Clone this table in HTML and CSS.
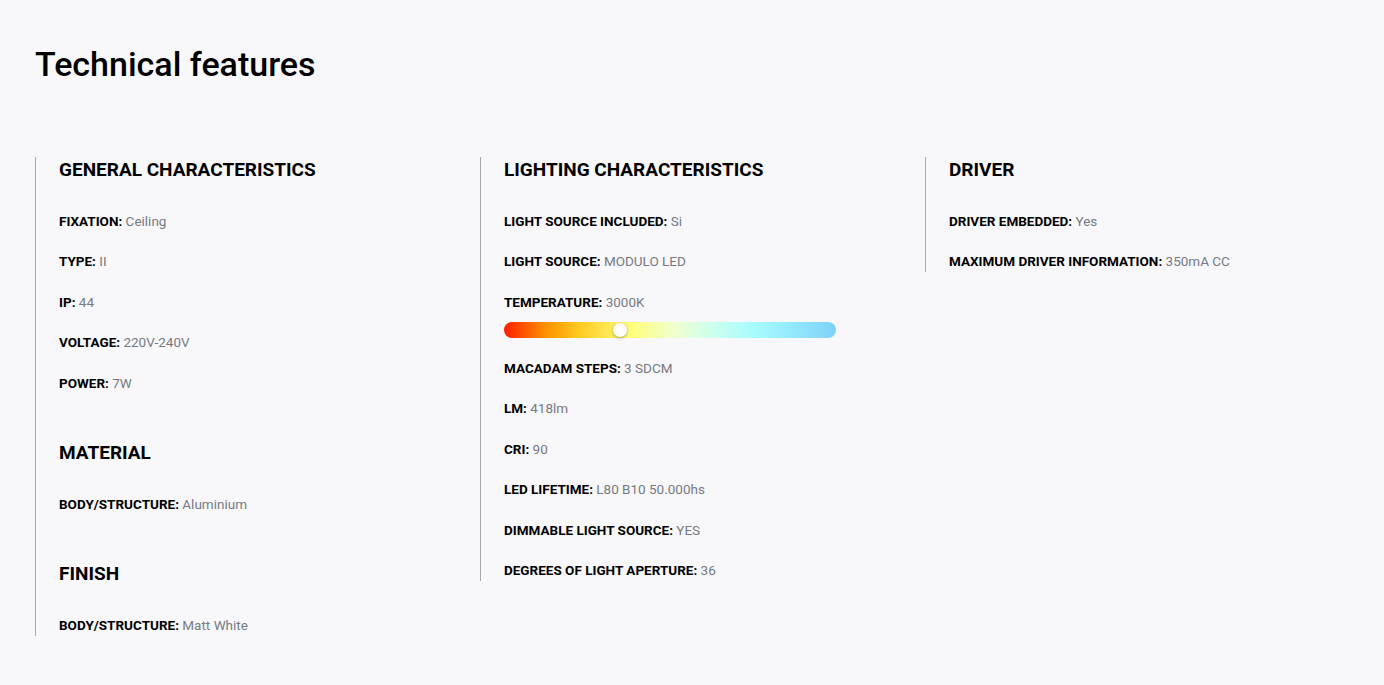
FILE: index.html
```html
<!DOCTYPE html>
<html lang="en">
<head>
  <meta charset="UTF-8">
  <title>Technical features</title>
  <link rel="stylesheet" href="styles.css">
</head>
<body>
  <section class="features">
    <h1>Technical features</h1>

    <div class="columns">
      <div class="column">
        <h2>GENERAL CHARACTERISTICS</h2>
        <p class="item"><b>FIXATION:</b> Ceiling</p>
        <p class="item"><b>TYPE:</b> II</p>
        <p class="item"><b>IP:</b> 44</p>
        <p class="item"><b>VOLTAGE:</b> 220V-240V</p>
        <p class="item"><b>POWER:</b> 7W</p>

        <h2 class="group">MATERIAL</h2>
        <p class="item"><b>BODY/STRUCTURE:</b> Aluminium</p>

        <h2 class="group">FINISH</h2>
        <p class="item"><b>BODY/STRUCTURE:</b> Matt White</p>
      </div>

      <div class="column">
        <h2>LIGHTING CHARACTERISTICS</h2>
        <p class="item"><b>LIGHT SOURCE INCLUDED:</b> Si</p>
        <p class="item"><b>LIGHT SOURCE:</b> MODULO LED</p>
        <p class="item"><b>TEMPERATURE:</b> 3000K</p>
        <div class="temp-bar">
          <span class="knob" style="left: 35%"></span>
        </div>
        <p class="item"><b>MACADAM STEPS:</b> 3 SDCM</p>
        <p class="item"><b>LM:</b> 418lm</p>
        <p class="item"><b>CRI:</b> 90</p>
        <p class="item"><b>LED LIFETIME:</b> L80 B10 50.000hs</p>
        <p class="item"><b>DIMMABLE LIGHT SOURCE:</b> YES</p>
        <p class="item"><b>DEGREES OF LIGHT APERTURE:</b> 36</p>
      </div>

      <div class="column">
        <h2>DRIVER</h2>
        <p class="item"><b>DRIVER EMBEDDED:</b> Yes</p>
        <p class="item"><b>MAXIMUM DRIVER INFORMATION:</b> 350mA CC</p>
      </div>
    </div>
  </section>
</body>
</html>
```

FILE: styles.css
```css
body {
  margin: 0;
  background: #f8f8fa;
  font-family: Roboto, "Liberation Sans", Arial, sans-serif;
  color: #000;
}
.features {
  padding: 44px 35px 50px;
}
h1 {
  margin: 0;
  font-size: 34px;
  font-weight: 500;
  line-height: 40px;
}
.columns {
  display: grid;
  grid-template-columns: repeat(3, 445px);
  align-items: start;
  margin-top: 73px;
}
.column {
  border-left: 1px solid #a8a8ac;
  padding-left: 23px;
  padding-bottom: 1px;
}
h2 {
  margin: 0;
  font-size: 19px;
  font-weight: 700;
  line-height: 26px;
}
h2.group {
  margin-top: 47px;
}
.item {
  margin: 0;
  font-size: 13.5px;
  line-height: 20px;
  color: #767a82;
}
h2 + .item {
  margin-top: 28px;
}
.item + .item {
  margin-top: 20.45px;
}
.item b {
  font-weight: 700;
  color: #000;
}
.temp-bar {
  position: relative;
  width: 332px;
  height: 16px;
  margin: 10px 0 20px;
  border-radius: 8px;
  background: linear-gradient(to right, #ff1e00 0%, #ff8c00 12%, #ffc81e 22%, #ffff78 38%, #f0ffd2 52%, #c8fff0 64%, #a6fbff 76%, #7fd2f8 100%);
}
.knob {
  position: absolute;
  top: 1px;
  width: 14px;
  height: 14px;
  margin-left: -7px;
  border-radius: 50%;
  background: #fff;
  box-shadow: 0 1px 3px rgba(0, 0, 0, 0.35);
}
```
